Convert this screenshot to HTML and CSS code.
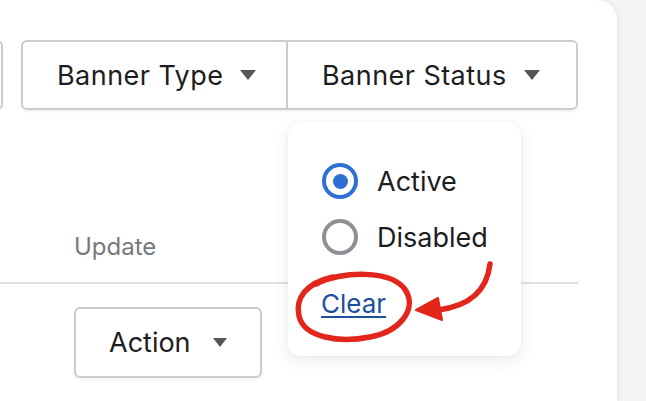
FILE: index.html
```html
<!DOCTYPE html>
<html lang="en">
<head>
<meta charset="utf-8">
<title>Banners</title>
<link rel="stylesheet" href="styles.css">
</head>
<body>
<main class="card">
  <div class="toolbar">
    <button class="btn btn-partial" type="button" aria-label="Filter"></button>
    <div class="btn-group">
      <div class="dropdown">
        <button class="btn btn-type" type="button"><span>Banner Type</span><span class="caret"></span></button>
      </div>
      <div class="dropdown">
        <button class="btn btn-status" type="button"><span>Banner Status</span><span class="caret"></span></button>
        <div class="popover">
          <label class="radio-row"><span class="radio checked"></span><span>Active</span></label>
          <label class="radio-row"><span class="radio"></span><span>Disabled</span></label>
          <a class="clear-link" href="#">Clear</a>
        </div>
      </div>
    </div>
  </div>
  <div class="table">
    <div class="thead"><div class="th">Update</div></div>
    <div class="tbody">
      <button class="btn btn-action" type="button"><span>Action</span><span class="caret caret-sm"></span></button>
    </div>
  </div>
</main>
<svg class="annotation" width="646" height="401" viewBox="0 0 646 401" aria-hidden="true">
  <path class="ink" d="M316,284 C340,271 393,269 406,291 C417,310 399,332 370,337 C340,343 304,338 299,316 C295,298 306,283 333,277"/>
  <path class="ink" d="M490,264 C487,290 470,306 438,310"/>
  <polygon class="ink-fill" points="416,310 438,298 442,320"/>
</svg>
</body>
</html>
```
FILE: styles.css
```css
html, body {
  margin: 0;
  padding: 0;
}
body {
  width: 646px;
  height: 401px;
  overflow: hidden;
  background: #f4f4f5;
  font-family: Inter, "Noto Sans", sans-serif;
  color: #1c1d20;
  position: relative;
}
.card {
  width: 617px;
  height: 401px;
  background: #ffffff;
  border-top-right-radius: 20px;
  box-shadow: 1px 0 5px rgba(0, 0, 0, 0.07);
  box-sizing: border-box;
  padding-top: 40px;
  overflow: hidden;
}
.toolbar {
  display: flex;
  justify-content: flex-end;
  align-items: stretch;
  gap: 18px;
  padding-right: 39px;
  height: 70px;
}
.btn {
  font-family: inherit;
  font-size: 27px;
  color: #1c1d20;
  background: #ffffff;
  border: 2px solid #c9ccd0;
  border-radius: 6px;
  display: flex;
  align-items: center;
  box-sizing: border-box;
  margin: 0;
  cursor: pointer;
}
.btn-partial {
  width: 120px;
  flex: none;
  padding: 0;
  box-shadow: 0 2px 3px rgba(0, 0, 0, 0.05);
}
.btn-group {
  display: flex;
  flex: none;
  border: 2px solid #c9ccd0;
  border-radius: 6px;
  box-shadow: 0 2px 3px rgba(0, 0, 0, 0.05);
}
.dropdown {
  position: relative;
  display: flex;
}
.btn-group .btn {
  border: none;
  border-radius: 0;
  background: transparent;
  height: 66px;
  padding: 0 0 0 34px;
  gap: 17px;
  letter-spacing: 0.45px;
}
.btn-type {
  width: 265px;
  border-right: 2px solid #c9ccd0 !important;
}
.btn-status {
  width: 288px;
}
.caret {
  width: 0;
  height: 0;
  border-left: 8px solid transparent;
  border-right: 8px solid transparent;
  border-top: 10px solid #555659;
  flex: none;
}
.caret-sm {
  border-left-width: 7.5px;
  border-right-width: 7.5px;
  border-top-width: 9px;
}
.popover {
  position: absolute;
  top: 80px;
  left: 0;
  width: 233px;
  height: 234px;
  box-sizing: border-box;
  background: #ffffff;
  border-radius: 13px;
  box-shadow: 0 4px 16px rgba(0, 0, 0, 0.09), 0 0 3px rgba(0, 0, 0, 0.04);
  padding: 41px 0 0 34px;
  display: flex;
  flex-direction: column;
  align-items: flex-start;
  gap: 20px;
  z-index: 2;
}
.radio-row {
  display: flex;
  align-items: center;
  gap: 19px;
  height: 36px;
  font-size: 27px;
  color: #1c1d20;
}
.radio {
  width: 36px;
  height: 36px;
  box-sizing: border-box;
  border: 4px solid #8d9095;
  border-radius: 50%;
  display: flex;
  align-items: center;
  justify-content: center;
  flex: none;
}
.radio.checked {
  border-color: #2f6fd3;
}
.radio.checked::after {
  content: "";
  width: 15px;
  height: 15px;
  border-radius: 50%;
  background: #2f6fd3;
}
.clear-link {
  font-size: 26px;
  line-height: 31px;
  color: #1d4f9e;
  text-decoration: underline;
  text-decoration-thickness: 2px;
  text-underline-offset: 3px;
  margin-top: 13px;
  margin-left: -1px;
}
.table {
  width: 578px;
}
.thead {
  padding: 123px 0 21px 74px;
  border-bottom: 2px solid #dfe0e3;
}
.th {
  font-size: 24px;
  line-height: 28px;
  color: #76797e;
}
.tbody {
  padding: 23px 0 0 74px;
}
.btn-action {
  width: 188px;
  height: 71px;
  padding: 0 0 0 33px;
  gap: 22px;
  box-shadow: 0 2px 3px rgba(0, 0, 0, 0.05);
}
.annotation {
  position: absolute;
  left: 0;
  top: 0;
  pointer-events: none;
  z-index: 5;
}
.ink {
  fill: none;
  stroke: #e3261b;
  stroke-width: 5.5;
  stroke-linecap: round;
  stroke-linejoin: round;
}
.ink-fill {
  fill: #e3261b;
  stroke: #e3261b;
  stroke-width: 2;
  stroke-linejoin: round;
}
```
